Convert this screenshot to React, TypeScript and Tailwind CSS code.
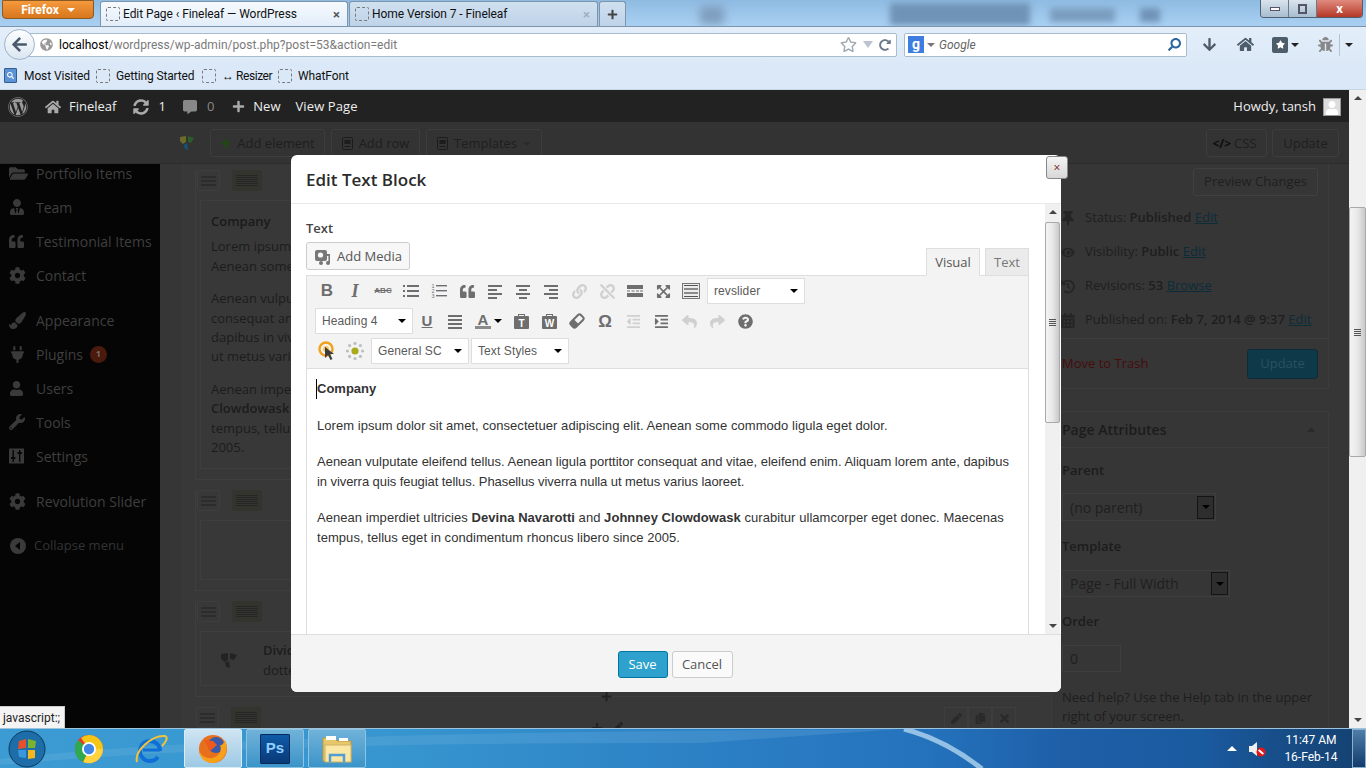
import React from "react";
import {
  FaFolderOpen, FaUserTie, FaQuoteLeft, FaCog, FaPaintBrush, FaPlug, FaUser, FaWrench,
  FaLink, FaUnlink, FaExpandArrowsAlt, FaOutdent, FaIndent, FaReply, FaShare, FaQuestionCircle,
  FaHome, FaSyncAlt, FaCommentAlt, FaPlus, FaThumbtack, FaEye, FaHistory, FaCalendarAlt, FaWordpress,
  FaArrowDown, FaSearch, FaStar, FaRegStar, FaGlobeAmericas, FaArrowLeft, FaRedoAlt, FaPen, FaCopy, FaTimes, FaBug,
} from "react-icons/fa";

const osans = "font-['Open_Sans',sans-serif]";
const chrome = "font-['Roboto',sans-serif]";

function Lines({ d, c = "#6e6e6e" }: { d: [number, number, number][]; c?: string }) {
  return (
    <svg width="16" height="16" viewBox="0 0 16 16">
      {d.map(([x, y, w], i) => (
        <rect key={i} x={x} y={y} width={w} height="2" fill={c} />
      ))}
    </svg>
  );
}

function TB({ children, w = "w-7" }: { children: React.ReactNode; w?: string }) {
  return <div className={`${w} h-6 flex items-center justify-center shrink-0`}>{children}</div>;
}

function Sel({ label, w }: { label: string; w: string }) {
  return (
    <div className={`${w} h-[26px] bg-white border border-[#dedede] flex items-center justify-between pl-[6px] pr-[6px] shrink-0 text-[12px] tracking-[0.1px] text-[#5a5a5a] font-['Liberation_Sans',sans-serif]`}>
      <span>{label}</span>
      <span className="w-0 h-0 border-x-[4px] border-x-transparent border-t-[4px] border-t-black" />
    </div>
  );
}

function Clip({ t }: { t: string }) {
  return (
    <svg width="17" height="17" viewBox="0 0 17 17">
      <rect x="1" y="3" width="15" height="13" rx="1" fill="#6e6e6e" />
      <rect x="5" y="1" width="7" height="3" fill="#6e6e6e" />
      <rect x="6" y="2" width="5" height="1" fill="#f3f3f3" />
      <text x="8.5" y="14" textAnchor="middle" fontSize="10" fontWeight="700" fill="#fff" fontFamily="Liberation Sans">{t}</text>
    </svg>
  );
}

function Toolbar() {
  const g = "#6e6e6e";
  const dis = "#d0d0d0";
  return (
    <div className="h-[94px] bg-[#f3f3f3] border-x border-y border-[#dedede] flex flex-col pl-[6px] pt-[2px] gap-1">
      <div className="flex items-center h-[26px]">
        <TB><span className="font-['Liberation_Sans',sans-serif] font-bold text-[17px] text-[#6e6e6e]">B</span></TB>
        <TB><span className="font-['Liberation_Serif',serif] italic font-bold text-[18px] text-[#6e6e6e]">I</span></TB>
        <TB><span className="font-['Liberation_Sans',sans-serif] text-[8px] font-bold text-[#6e6e6e] line-through">ABC</span></TB>
        <TB><Lines d={[[4, 2, 12], [4, 7, 12], [4, 12, 12], [0, 2, 2], [0, 7, 2], [0, 12, 2]]} /></TB>
        <TB>
          <svg width="16" height="16" viewBox="0 0 16 16" fontFamily="Liberation Sans" fontSize="5.5" fill="#6e6e6e">
            <text x="0.5" y="5">1</text><text x="0.5" y="10">2</text><text x="0.5" y="15">3</text>
            <rect x="5" y="2" width="11" height="1.4" /><rect x="5" y="7" width="11" height="1.4" /><rect x="5" y="12" width="11" height="1.4" />
          </svg>
        </TB>
        <TB><FaQuoteLeft size={15} color={g} /></TB>
        <TB><Lines d={[[1, 2, 14], [1, 6, 9], [1, 10, 14], [1, 14, 9]]} /></TB>
        <TB><Lines d={[[1, 2, 14], [4, 6, 8], [1, 10, 14], [4, 14, 8]]} /></TB>
        <TB><Lines d={[[1, 2, 14], [6, 6, 9], [1, 10, 14], [6, 14, 9]]} /></TB>
        <TB><FaLink size={15} color={dis} /></TB>
        <TB><FaUnlink size={15} color={dis} /></TB>
        <TB>
          <svg width="16" height="14" viewBox="0 0 16 14">
            <rect x="0" y="1" width="16" height="4" fill={g} />
            <rect x="0" y="6.5" width="3" height="1" fill={g} /><rect x="4.5" y="6.5" width="3" height="1" fill={g} /><rect x="9" y="6.5" width="3" height="1" fill={g} /><rect x="13" y="6.5" width="3" height="1" fill={g} />
            <rect x="0" y="9" width="16" height="4" fill={g} />
          </svg>
        </TB>
        <TB><FaExpandArrowsAlt size={15} color={g} /></TB>
        <TB>
          <svg width="18" height="16" viewBox="0 0 18 16">
            <rect x="0.5" y="0.5" width="17" height="15" fill="#ececec" stroke="#777" />
            <rect x="2" y="2" width="14" height="1" fill="#555" />
            <rect x="2" y="5" width="14" height="2" fill="#8a8a8a" />
            <rect x="2" y="9" width="14" height="2" fill="#8a8a8a" />
            <rect x="2" y="13" width="14" height="1" fill="#555" />
          </svg>
        </TB>
        <div className="ml-[2px]"><Sel label="revslider" w="w-[98px]" /></div>
      </div>
      <div className="flex items-center h-[26px] pl-[2px]">
        <Sel label="Heading 4" w="w-[98px]" />
        <TB><span className="font-['Liberation_Sans',sans-serif] text-[15px] font-bold text-[#6e6e6e] underline">U</span></TB>
        <TB><Lines d={[[1, 2, 14], [1, 6, 14], [1, 10, 14], [1, 14, 14]]} /></TB>
        <div className="w-[38px] h-6 flex items-center justify-start pl-[6px] gap-[3px] shrink-0">
          <div className="flex flex-col items-center w-4">
            <span className="font-['Liberation_Sans',sans-serif] font-bold text-[15px] leading-[13px] text-[#6e6e6e]">A</span>
            <span className="w-4 h-[3px] bg-[#8a8a8a]" />
          </div>
          <span className="w-0 h-0 border-x-[4px] border-x-transparent border-t-[4px] border-t-black" />
        </div>
        <TB><Clip t="T" /></TB>
        <TB><Clip t="W" /></TB>
        <TB>
          <svg width="16" height="16" viewBox="0 0 16 16">
            <g transform="rotate(-45 8 8)">
              <rect x="1" y="4.5" width="14" height="7" rx="2" fill="#f3f3f3" stroke={g} strokeWidth="2" />
              <rect x="1" y="4.5" width="6" height="7" rx="1" fill={g} />
            </g>
          </svg>
        </TB>
        <TB><span className="font-['Liberation_Sans',sans-serif] font-bold text-[17px] leading-none text-[#6e6e6e]">Ω</span></TB>
        <TB><FaOutdent size={15} color={dis} /></TB>
        <TB><FaIndent size={15} color={g} /></TB>
        <TB><FaReply size={15} color={dis} /></TB>
        <TB><FaShare size={15} color={dis} /></TB>
        <TB><FaQuestionCircle size={15} color={g} /></TB>
      </div>
      <div className="flex items-center h-[26px]">
        <TB>
          <svg width="18" height="20" viewBox="0 0 18 20">
            <circle cx="8" cy="8" r="6.5" fill="none" stroke="#f2a11d" strokeWidth="2.4" />
            <circle cx="8" cy="8" r="3" fill="#f7c25a" />
            <path d="M7 6 L7 17 L10 14 L12.5 19 L14.5 18 L12 13 L16 13 Z" fill="#3c3c3c" />
          </svg>
        </TB>
        <TB>
          <svg width="20" height="20" viewBox="0 0 20 20">
            <circle cx="10" cy="10" r="3.6" fill="#a9ab1c" />
            <g fill="#b9c0c0">
              <circle cx="10" cy="2.4" r="1.6" /><circle cx="10" cy="17.6" r="1.6" /><circle cx="2.4" cy="10" r="1.6" /><circle cx="17.6" cy="10" r="1.6" />
              <circle cx="4.6" cy="4.6" r="1.6" /><circle cx="15.4" cy="4.6" r="1.6" /><circle cx="4.6" cy="15.4" r="1.6" /><circle cx="15.4" cy="15.4" r="1.6" />
            </g>
          </svg>
        </TB>
        <div className="ml-[2px] flex gap-[2px]">
          <Sel label="General SC" w="w-[98px]" />
          <Sel label="Text Styles" w="w-[98px]" />
        </div>
      </div>
    </div>
  );
}

function ScrollV({ thumbTop, thumbH, wide }: { thumbTop: string; thumbH: string; wide?: boolean }) {
  return (
    <div className={`${wide ? "w-[17px]" : "w-[15px]"} h-full bg-[#f0f0f0] flex flex-col items-center shrink-0`}>
      <div className="h-[16px] flex items-center justify-center shrink-0"><span className="w-0 h-0 border-x-[4px] border-x-transparent border-b-[4px] border-b-[#444]" /></div>
      <div className={`${thumbTop} shrink-0`} />
      <div className={`${thumbH} w-full shrink-0 border border-[#a9a9a9] rounded-[2px] bg-gradient-to-r from-[#f4f4f4] via-[#e8e8e8] to-[#c9c9cc] flex items-center justify-center`}>
        <div className="w-[7px] flex flex-col gap-px">
          <span className="h-px bg-[#555]" /><span className="h-px bg-[#555]" /><span className="h-px bg-[#555]" /><span className="h-px bg-[#555]" />
        </div>
      </div>
      <div className="flex-1" />
      <div className="h-[16px] flex items-center justify-center shrink-0"><span className="w-0 h-0 border-x-[4px] border-x-transparent border-t-[4px] border-t-[#444]" /></div>
    </div>
  );
}

function Modal() {
  return (
    <div className={`absolute left-[291px] top-[155px] w-[770px] h-[537px] bg-white rounded-[6px] flex flex-col ${osans}`}>
      <div className="h-[49px] shrink-0 border-b border-[#e8e8e8] flex items-center pl-[15px] pt-[1px] text-[17px] font-semibold text-[#2b2b2b]">Edit Text Block</div>
      <div className="h-[430px] shrink-0 flex pr-px overflow-hidden">
        <div className="flex-1 pl-[15px] pt-[15px] overflow-hidden">
          <div className="text-[13px] leading-[18px] font-semibold text-[#444]">Text</div>
          <div className="w-[723px] mt-[5px]">
            <div className="h-[33px] flex justify-between items-start relative z-10">
              <div className="w-[104px] h-[28px] bg-[#f7f7f7] border border-[#ccc] rounded-[3px] flex items-center pl-[7px] pt-px gap-[5px] text-[13px] text-[#555]">
                <svg width="18" height="18" viewBox="0 0 18 18">
                  <rect x="1" y="2" width="12" height="11" rx="2" fill="#777" />
                  <circle cx="6.5" cy="7" r="2.6" fill="#f7f7f7" />
                  <path d="M13 6 h3 v9 a2 2 0 1 1 -1.6 -2 V8 h-1.4 Z" fill="#777" />
                  <circle cx="7" cy="15" r="2" fill="#777" />
                </svg>
                <span>Add Media</span>
              </div>
              <div className="flex gap-[5px] mt-[6px]">
                <div className="w-[54px] h-[28px] bg-[#f3f3f3] border border-[#dedede] border-b-[#f3f3f3] flex items-center justify-center pt-px text-[13px] text-[#555]">Visual</div>
                <div className="w-[44px] h-[28px] bg-[#ebebeb] border border-[#dedede] flex items-center justify-center pt-px text-[13px] text-[#777]">Text</div>
              </div>
            </div>
            <Toolbar />
            <div className="h-[300px] border-x border-[#dedede] px-[10px] pt-[10px] font-['Liberation_Sans',sans-serif] text-[13px] leading-[20px] text-[#333] tracking-[0.05px]">
              <div className="font-bold text-[13px] tracking-normal h-5 border-l border-black -ml-px">Company</div>
              <p className="mt-[17px]">Lorem ipsum dolor sit amet, consectetuer adipiscing elit. Aenean some commodo ligula eget dolor.</p>
              <p className="mt-4 whitespace-nowrap"><span className="tracking-[-0.01px]">Aenean vulputate eleifend tellus. Aenean ligula porttitor consequat and vitae, eleifend enim. Aliquam lorem ante, dapibus</span><br /><span className="tracking-[-0.07px]">in viverra quis feugiat tellus. Phasellus viverra nulla ut metus varius laoreet.</span></p>
              <p className="mt-4 whitespace-nowrap">Aenean imperdiet ultricies <b>Devina Navarotti</b> and <b>Johnney Clowdowask</b> curabitur ullamcorper eget donec. Maecenas<br />tempus, tellus eget in condimentum rhoncus libero since 2005.</p>
            </div>
          </div>
        </div>
        <ScrollV thumbTop="h-[2px]" thumbH="h-[201px]" />
      </div>
      <div className="flex-1 bg-[#f4f4f4] border-t border-[#dedede] rounded-b-[6px] flex items-center justify-center gap-1 pt-[2px] pr-[2px]">
        <div className="w-[50px] h-[27px] bg-[#2ea2cc] border border-[#0074a2] rounded-[3px] flex items-center justify-center text-[13px] text-white">Save</div>
        <div className="w-[61px] h-[27px] bg-[#fafafa] border border-[#ccc] rounded-[3px] flex items-center justify-center text-[13px] text-[#555]">Cancel</div>
      </div>
      <div className="absolute -right-[7px] top-px w-[22px] h-[23px] border border-[#888] rounded-[3px] bg-gradient-to-b from-[#f4f4f4] to-[#d8d8d8] flex items-center justify-center text-[12px] leading-none text-[#7a1c10]">×</div>
    </div>
  );
}

const Nav: [React.ReactNode, string, string][] = [
  [<FaFolderOpen size={19} />, "Portfolio Items", ""],
  [<FaUserTie size={16} />, "Team", ""],
  [<FaQuoteLeft size={15} />, "Testimonial Items", ""],
  [<FaCog size={17} />, "Contact", "mb-[11px]"],
  [<FaPaintBrush size={17} />, "Appearance", ""],
  [<FaPlug size={17} />, "Plugins", ""],
  [<FaUser size={15} />, "Users", ""],
  [<FaWrench size={16} />, "Tools", ""],
  [
    <svg width="16" height="16" viewBox="0 0 16 16">
      <rect width="15" height="15" y="0.5" fill="#3a3a3a" />
      <rect x="3.5" y="2" width="1.4" height="12" fill="#050505" /><rect x="2" y="9" width="4.4" height="2" fill="#050505" />
      <rect x="10" y="2" width="1.4" height="12" fill="#050505" /><rect x="8.5" y="4" width="4.4" height="2" fill="#050505" />
    </svg>,
    "Settings",
    "mb-[11px]",
  ],
  [<FaCog size={17} />, "Revolution Slider", "mb-[11px]"],
];

function Sidebar() {
  return (
    <div className={`w-[160px] shrink-0 bg-[#050505] overflow-hidden ${osans}`}>
      <div className="-mt-[8px]">
        {Nav.map(([ic, label, cls]) => (
          <div key={label} className={`h-[34px] flex items-center text-[14px] text-[#3f3f3f] ${cls}`}>
            <span className="w-[36px] pl-[9px] flex justify-start text-[#3a3a3a] shrink-0">{ic}</span>
            <span>{label}</span>
            {label === "Plugins" && (
              <span className="ml-[7px] w-[17px] h-[17px] rounded-full bg-[#4a1a0c] text-[#7a6a60] text-[9px] font-bold flex items-center justify-center">1</span>
            )}
          </div>
        ))}
        <div className="h-[34px] mt-[3px] flex items-center text-[13px] text-[#333]">
          <span className="w-[34px] pl-[10px] shrink-0">
            <svg width="16" height="16" viewBox="0 0 16 16"><circle cx="8" cy="8" r="8" fill="#3a3a3a" /><path d="M10 4 V12 L5 8 Z" fill="#050505" /></svg>
          </span>
          <span>Collapse menu</span>
        </div>
      </div>
    </div>
  );
}

function RowHead({ right }: { right?: boolean }) {
  return (
    <div className="h-[21px] flex items-start gap-3 pl-px">
      <div className="w-[23px] h-[21px] border border-[#3e3e3e] rounded-[2px] flex flex-col justify-center gap-[2px] px-[3px]">
        <span className="h-[2px] bg-[#2c2c2c]" /><span className="h-[2px] bg-[#2c2c2c]" /><span className="h-[2px] bg-[#2c2c2c]" />
      </div>
      <div className="w-[30px] h-[21px] bg-[#34342e] rounded-[2px] flex flex-col justify-center gap-px px-[4px]">
        <span className="h-px bg-[#262626]" /><span className="h-px bg-[#262626]" /><span className="h-px bg-[#262626]" /><span className="h-px bg-[#262626]" /><span className="h-px bg-[#262626]" /><span className="h-px bg-[#262626]" />
      </div>
      {right && (
        <div className="ml-[318px] mt-[15px] flex gap-[10px] text-[#232323]">
          <FaPlus size={12} /><FaPen size={10} />
        </div>
      )}
      {right && (
        <div className="ml-auto mr-[25px] flex text-[#2a2a2a]">
          <span className="w-6 h-[22px] border border-[#3e3e3e] flex items-center justify-center"><FaPen size={11} /></span>
          <span className="w-6 h-[22px] border border-[#3e3e3e] flex items-center justify-center"><FaCopy size={11} /></span>
          <span className="w-6 h-[22px] border border-[#3e3e3e] flex items-center justify-center"><FaTimes size={13} /></span>
        </div>
      )}
    </div>
  );
}

function Row({ children }: { children: React.ReactNode }) {
  return <div className="w-[846px] border-l border-b border-[#3e3e3e] pb-[10px]">{children}</div>;
}

function Content() {
  const box = "border border-[#3e3e3e] mt-[9px] ml-[4px] w-[841px]";
  return (
    <div className={`w-[868px] shrink-0 border-l border-[#3a3a3a] ml-[22px] pl-[12px] pr-[9px] pt-[6px] overflow-hidden text-[13px] leading-[19.4px] text-[#1c1c1c] bg-[#383838] ${osans}`}>
      <Row>
        <RowHead />
        <div className={`${box} h-[269px] p-[10px] pt-[11px] whitespace-nowrap`}>
          <div className="font-semibold text-[#1a1a1a]">Company</div>
          <p className="mt-[6px]">Lorem ipsum<br />Aenean some</p>
          <p className="mt-[13px]">Aenean vulpu<br />consequat an<br />dapibus in viv<br />ut metus vari</p>
          <p className="mt-[13px]">Aenean impe<br /><b className="font-semibold">Clowdowask</b><br />tempus, tellu<br />2005.</p>
        </div>
      </Row>
      <div className="h-[10px]" />
      <Row>
        <RowHead />
        <div className={`${box} h-[60px]`} />
      </Row>
      <div className="h-[10px]" />
      <Row>
        <RowHead />
        <div className={`${box} h-[55px] flex items-center pl-[18px] pt-[3px] gap-[24px] whitespace-nowrap`}>
          <svg width="20" height="18" viewBox="0 0 20 18"><path d="M2 3 L9 2 L9 9 L6 11 L2 8 Z M11 2 L18 4 L15 9 L11 8 Z M6 12 L10 10 L11 17 L7 16 Z" fill="#232323" /></svg>
          <div className="leading-[20px]"><b className="font-semibold">Divid</b><br />dotte</div>
        </div>
      </Row>
      <div className="-mt-[11px] h-[21px] flex justify-center items-center text-[#232323] w-[822px]"><FaPlus size={11} /></div>
      <RowHead right />
    </div>
  );
}

function Side() {
  const line = "flex items-center h-[34px] whitespace-nowrap";
  const link = "underline text-[#0c2c3a]";
  const ic = "w-[23px] pr-[9px] shrink-0 text-[#252525] flex justify-center -ml-[2px]";
  return (
    <div className={`flex-1 pl-[1px] pr-[21px] text-[13px] text-[#1e1e1e] overflow-hidden bg-[#363636] ${osans}`}>
      <div className="border border-[#3c3c3c] border-t-0 w-[278px] h-[225px] flex flex-col">
        <div className="flex justify-end pr-[10px] pt-[4px] h-[32px] shrink-0">
          <div className="w-[125px] h-[28px] border border-[#404040] rounded-[3px] flex items-center justify-center text-[#1f1f1f]">Preview Changes</div>
        </div>
        <div className="pl-[11px] mt-[5px]">
          <div className={line}><span className={ic}><FaThumbtack size={15} /></span><span className="ml-px">Status: <b className="font-semibold">Published</b> <span className={link}>Edit</span></span></div>
          <div className={line}><span className={ic}><FaEye size={17} /></span><span className="ml-px">Visibility: <b className="font-semibold">Public</b> <span className={link}>Edit</span></span></div>
          <div className={line}><span className={ic}><FaHistory size={15} /></span><span className="ml-px">Revisions: <b className="font-semibold">53</b> <span className={link}>Browse</span></span></div>
          <div className={line}><span className={ic}><FaCalendarAlt size={15} /></span><span className="ml-px">Published on: <b className="font-semibold">Feb 7, 2014 @ 9:37</b> <span className={link}>Edit</span></span></div>
        </div>
        <div className="mt-px border-t border-[#3e3e3e] flex-1 flex items-center justify-between pl-[10px] pr-[10px]">
          <span className="text-[#470c0c]">Move to Trash</span>
          <div className="w-[71px] h-[30px] bg-[#0e3949] border border-[#0c2c3a] rounded-[3px] flex items-center justify-center text-[#2a5060]">Update</div>
        </div>
      </div>
      <div className="border border-[#3c3c3c] w-[278px] mt-[22px] h-[400px]">
        <div className="h-[36px] border-b border-[#3c3c3c] flex items-center justify-between pl-[10px] pr-[13px] text-[14px] font-semibold text-[#1c1c1c]">
          <span>Page Attributes</span>
          <span className="w-0 h-0 border-x-[4px] border-x-transparent border-b-[5px] border-b-[#2a2a2a]" />
        </div>
        <div className="pl-[10px]">
          <div className="mt-[13px] h-[18px] leading-[18px] font-semibold text-[#1c1c1c]">Parent</div>
          <div className="mt-[14px] w-[154px] h-[28px] border border-[#3e3e3e] flex items-center justify-between pl-[7px] pr-[1px] text-[14px] text-[#1f1f1f]">
            <span>(no parent)</span>
            <span className="w-[17px] h-[23px] border border-[#141414] bg-[#2e2e2e] flex items-center justify-center"><span className="w-0 h-0 border-x-[4px] border-x-transparent border-t-[4px] border-t-black" /></span>
          </div>
          <div className="mt-[16px] h-[18px] leading-[18px] font-semibold text-[#1c1c1c]">Template</div>
          <div className="mt-[15px] w-[168px] h-[27px] border border-[#3e3e3e] flex items-center justify-between pl-[7px] pr-[1px] text-[14px] text-[#1f1f1f]">
            <span>Page - Full Width</span>
            <span className="w-[17px] h-[23px] border border-[#141414] bg-[#2e2e2e] flex items-center justify-center"><span className="w-0 h-0 border-x-[4px] border-x-transparent border-t-[4px] border-t-black" /></span>
          </div>
          <div className="mt-[15px] h-[18px] leading-[18px] font-semibold text-[#1c1c1c]">Order</div>
          <div className="mt-[15px] w-[59px] h-[27px] border border-[#3e3e3e] flex items-center pl-[7px] text-[14px] text-[#1f1f1f]">0</div>
          <div className="mt-[16px] leading-[19px] whitespace-nowrap">Need help? Use the Help tab in the upper<br />right of your screen.</div>
        </div>
      </div>
    </div>
  );
}

function Dashed() {
  return <span className="block w-[14px] h-[14px] border border-dashed border-[#7a7a7a] rounded-[2px] shrink-0" />;
}

function Tab({ label, active, w }: { label: string; active?: boolean; w: string }) {
  return (
    <div className={`${w} h-[25px] shrink-0 rounded-t-[3px] border border-b-0 border-[#7d95ab] flex items-center pl-[5px] pr-[7px] gap-[3px] text-[12px] text-[#111] ${active ? "bg-gradient-to-b from-[#f6fafe] to-[#e2edf9]" : "bg-gradient-to-b from-[#cfe0f0] to-[#bfd3e8]"}`}>
      <Dashed />
      <span className="flex-1 whitespace-nowrap overflow-hidden tracking-[-0.07px]">{label}</span>
      <span className={`text-[13px] font-bold leading-none ${active ? "text-[#555]" : "text-[#9fb0c0]"}`}>×</span>
    </div>
  );
}

function Caret({ c = "#333" }: { c?: string }) {
  return <span className="block w-0 h-0 border-x-[4px] border-x-transparent border-t-[4px]" style={{ borderTopColor: c }} />;
}

function Browser() {
  return (
    <div className={`h-[90px] shrink-0 flex flex-col ${chrome}`}>
      <div className="h-[27px] relative overflow-hidden border-b border-[#7d95ab] bg-gradient-to-b from-[#8fbbe2] to-[#a9d0f2] flex items-end">
        <div className="absolute left-[890px] top-[3px] w-[140px] h-[22px] bg-[#6f93b6] blur-[3px]" />
        <div className="absolute left-[1050px] top-[8px] w-[65px] h-[14px] bg-[#7a9dbf] blur-[3px]" />
        <div className="absolute left-[1140px] top-[8px] w-[20px] h-[14px] bg-[#6f93b6] blur-[3px]" />
        <div className="absolute left-[700px] top-[6px] w-[24px] h-[18px] bg-[#7f9fbe] blur-[4px]" />
        <div className="absolute left-[2px] top-0 w-[92px] h-[19px] rounded-b-[4px] border border-[#8a5a20] bg-gradient-to-b from-[#f59a3c] to-[#d8761c] flex items-center justify-center gap-[8px] text-[12px] font-bold text-white">
          <span>Firefox</span><Caret c="#fff" />
        </div>
        <div className="relative flex items-end pl-[100px] w-full h-full gap-px">
          <Tab label="Edit Page ‹ Fineleaf — WordPress" active w="w-[248px]" />
          <Tab label="Home Version 7 - Fineleaf" w="w-[249px]" />
          <div className="w-[27px] h-[25px] rounded-t-[3px] border border-b-0 border-[#7d95ab] bg-gradient-to-b from-[#cfe0f0] to-[#bfd3e8] flex items-center justify-center"><FaPlus size={11} color="#444" /></div>
        </div>
        <div className="absolute left-[1260px] top-0 w-[103px] h-[18px] rounded-b-[4px] border border-[#50606f] border-t-0 flex overflow-hidden">
          <div className="w-[28px] bg-gradient-to-b from-[#d9e4ee] to-[#a8bdd0] border-r border-[#6a7a88] flex items-center justify-center"><span className="w-[10px] h-[4px] bg-white border border-[#556]" /></div>
          <div className="w-[28px] bg-gradient-to-b from-[#d9e4ee] to-[#a8bdd0] border-r border-[#6a7a88] flex items-center justify-center"><span className="w-[9px] h-[10px] bg-transparent border-2 border-[#556]" /></div>
          <div className="flex-1 bg-gradient-to-b from-[#e08a7e] to-[#b43526] flex items-center justify-center text-white font-bold text-[13px] leading-none">x</div>
        </div>
      </div>
      <div className="h-[35px] bg-gradient-to-b from-[#e3eefa] to-[#dce9f7] flex items-center relative">
        <div className="absolute left-[4px] top-[2px] w-[31px] h-[31px] rounded-full bg-gradient-to-b from-[#fdfeff] to-[#dbe6f1] border border-[#9fb2c6] flex items-center justify-center z-10"><FaArrowLeft size={17} color="#4a5a6a" /></div>
        <div className="ml-[22px] w-[875px] h-[24px] bg-white border border-[#a8bcd0] rounded-[2px] flex items-center pl-[17px] pr-[5px] text-[12px] text-[#7a7a7a]">
          <FaGlobeAmericas size={13} color="#9a9a9a" className="mr-[6px]" />
          <span className="tracking-[0.04px]"><span className="text-black">localhost</span>/wordpress/wp-admin/post.php?post=53&amp;action=edit</span>
          <span className="ml-auto flex items-center gap-[6px]">
            <FaRegStar size={17} color="#a0a8b0" />
            <span className="w-0 h-0 border-x-[5px] border-x-transparent border-t-[7px] border-t-[#b9c4cf]" />
            <FaRedoAlt size={12} color="#6a7a88" />
          </span>
        </div>
        <div className="ml-[7px] w-[283px] h-[24px] bg-white border border-[#a8bcd0] rounded-[2px] flex items-center pl-[3px] pr-[5px] text-[12px] italic text-[#666]">
          <span className="w-[16px] h-[17px] bg-[#3d7de0] text-white text-[14px] font-bold not-italic flex items-center justify-center">g</span>
          <span className="mx-[3px]"><Caret c="#777" /></span>
          <span className="ml-[1px]">Google</span>
          <FaSearch size={13} color="#2a66a0" className="ml-auto -scale-x-100" />
        </div>
        <div className="ml-[15px] flex items-center text-[#4e5d6c]">
          <FaArrowDown size={15} />
          <FaHome size={17} className="ml-[20px]" />
          <span className="ml-[18px] w-[16px] h-[16px] bg-[#4e5d6c] rounded-[2px] flex items-center justify-center"><FaStar size={9} color="#fff" /></span>
          <span className="ml-[3px]"><Caret c="#222" /></span>
          <FaBug size={15} color="#888" className="ml-[19px]" />
          <span className="ml-[6px] h-[22px] w-px bg-[#b5c3d1]" />
          <span className="ml-[5px]"><Caret c="#222" /></span>
        </div>
      </div>
      <div className="h-[28px] bg-[#dae8f7] flex items-center pl-[4px] text-[12px] tracking-[-0.1px] text-[#111] border-b border-[#c7d4e2]">
        <span className="w-[13px] h-[15px] bg-[#5b93d5] border border-[#2f5e95] rounded-[1px] flex items-center justify-center"><FaSearch size={7} color="#fff" /></span>
        <span className="ml-[7px] w-[65px] whitespace-nowrap">Most Visited</span>
        <span className="ml-[7px]"><Dashed /></span>
        <span className="ml-[6px] w-[78px] whitespace-nowrap tracking-[-0.15px]">Getting Started</span>
        <span className="ml-[8px]"><Dashed /></span>
        <span className="ml-[6px] w-[49px] whitespace-nowrap tracking-[-0.45px]">↔ Resizer</span>
        <span className="ml-[7px]"><Dashed /></span>
        <span className="ml-[6px]">WhatFont</span>
      </div>
    </div>
  );
}

function WpBar() {
  return (
    <div className={`h-[32px] shrink-0 bg-[#222] flex items-center pt-px text-[13px] text-[#eee] ${osans}`}>
      <span className="ml-[8px]"><FaWordpress size={20} color="#999" /></span>
      <FaHome size={16} color="#aaa" className="ml-[17px]" />
      <span className="ml-[8px]">Fineleaf</span>
      <FaSyncAlt size={16} color="#aaa" className="ml-[17px]" />
      <span className="ml-[9px]">1</span>
      <FaCommentAlt size={14} color="#888" className="ml-[17px]" />
      <span className="ml-[10px] text-[#888]">0</span>
      <FaPlus size={13} color="#aaa" className="ml-[18px]" />
      <span className="ml-[8px]">New</span>
      <span className="ml-[15px] tracking-[0.1px]">View Page</span>
      <span className="ml-auto">Howdy, tansh</span>
      <span className="ml-[7px] mr-[8px] w-[18px] h-[18px] bg-[#ddd] border border-[#999] flex items-end justify-center overflow-hidden"><FaUser size={14} color="#fff" /></span>
    </div>
  );
}

function Btn({ children, w, gap = "gap-[6px]" }: { children: React.ReactNode; w: string; gap?: string }) {
  return <div className={`${w} h-[28px] border border-[#3d3d3d] rounded-[3px] flex items-center justify-center ${gap} pt-[2px] text-[13px] text-[#1e1e1e]`}>{children}</div>;
}

function Doc() {
  return (
    <svg width="11" height="13" viewBox="0 0 11 13">
      <rect x="0.5" y="0.5" width="10" height="12" rx="1" fill="none" stroke="#1c1c1c" />
      <rect x="2.5" y="3" width="6" height="4" fill="#1c1c1c" /><rect x="2.5" y="9" width="6" height="1" fill="#1c1c1c" />
    </svg>
  );
}

function Composer() {
  return (
    <div className={`h-[42px] shrink-0 bg-[#333] border-b border-[#2c2c2c] flex items-center ${osans}`}>
      <svg className="ml-[179px]" width="16" height="16" viewBox="0 0 16 16">
        <path d="M1 2 L7 1 L7 7 L4 9 L1 6 Z" fill="#6b6a2a" /><path d="M9 1 L15 3 L12 8 L9 7 Z" fill="#2d5c2b" /><path d="M5 10 L8 8 L9 15 L6 14 Z" fill="#12557a" />
      </svg>
      <div className="ml-[15px] flex gap-[6px]">
        <Btn w="w-[115px]"><FaPlus size={11} color="#1e4a10" /><span>Add element</span></Btn>
        <Btn w="w-[89px]"><Doc /><span>Add row</span></Btn>
        <Btn w="w-[116px]"><Doc /><span>Templates</span><Caret c="#2a2a2a" /></Btn>
      </div>
      <div className="ml-auto mr-[10px] flex gap-[5px]">
        <Btn w="w-[61px]" gap="gap-[3px] pr-[4px]"><b className="text-[#0c0c0c] text-[12px]">&lt;/&gt;</b><span>CSS</span></Btn>
        <Btn w="w-[67px]"><span>Update</span></Btn>
      </div>
    </div>
  );
}

function TaskBtn({ children, active }: { children: React.ReactNode; active?: boolean }) {
  return (
    <div className={`w-[58px] h-[39px] border rounded-[2px] flex items-center justify-center shrink-0 ${active ? "border-[#d8ecf7] bg-gradient-to-b from-[#cfe4f2] to-[#9cc9e4]" : "bg-gradient-to-b from-[#6fb2d9] to-[#3a94c9] border-[#8fc4e0]"}`}>{children}</div>
  );
}

function Taskbar() {
  return (
    <div className="h-[40px] shrink-0 relative overflow-hidden border-t border-[#9fc3dd] bg-[linear-gradient(90deg,#3b9bd2_0%,#3796cf_28%,#2a7dc3_55%,#2472bc_68%,#1e5fa8_78%,#1a5a9f_88%,#14406f_100%)] flex items-center font-['Roboto',sans-serif]">
      <svg className="absolute left-0 top-0" width="1366" height="40" viewBox="0 0 1366 40">
        <path d="M904 0 C935 8 962 24 982 40" fill="none" stroke="#a8cfec" strokeWidth="5" opacity="0.85" />
        <path d="M0 30 C200 8 500 2 900 0 L700 14 C400 14 200 18 0 36 Z" fill="#7fbce3" opacity="0.22" />
      </svg>
      <svg className="ml-[8px] relative" width="38" height="38" viewBox="0 0 38 38">
        <circle cx="19" cy="19" r="18" fill="#1c6da8" stroke="#0e3a5c" />
        <path d="M11 11 L18 9 L18 18 L10 19 Z" fill="#e6502b" /><path d="M20 9 L28 11 L27 18 L20 18 Z" fill="#7ab42c" />
        <path d="M10 20 L18 20 L18 28 L11 27 Z" fill="#3b97dc" /><path d="M20 20 L27 20 L27 28 L20 29 Z" fill="#f5b81c" />
      </svg>
      <svg className="ml-[28px] relative" width="30" height="30" viewBox="0 0 30 30">
        <circle cx="15" cy="15" r="14" fill="#e23b2e" />
        <path d="M15 1 A14 14 0 0 1 29 15 L15 15 L7 4 A14 14 0 0 1 15 1 Z" fill="#f5c518" />
        <path d="M15 15 L29 15 A14 14 0 0 1 9 28 Z" fill="#ffd33d" />
        <path d="M15 15 L9 28 A14 14 0 0 1 1 15 A14 14 0 0 1 4 6 Z" fill="#2da94f" />
        <circle cx="15" cy="15" r="7" fill="#fff" /><circle cx="15" cy="15" r="5.2" fill="#3f86e8" />
      </svg>
      <svg className="ml-[30px] relative" width="34" height="32" viewBox="0 0 34 32">
        <path d="M26 18 A10 10 0 1 0 24 24" fill="none" stroke="#0f6fd6" strokeWidth="4" />
        <rect x="9" y="15.5" width="17" height="3" fill="#0f6fd6" />
        <path d="M3 29 C0 18 18 2 31 3 C34 4 33 8 28 13" fill="none" stroke="#f2c23c" strokeWidth="2" />
      </svg>
      <div className="ml-[16px] flex gap-[4px] relative">
        <TaskBtn active>
          <svg width="32" height="32" viewBox="0 0 32 32">
            <circle cx="16" cy="16" r="14" fill="#e8701c" />
            <circle cx="19" cy="12" r="8" fill="#3a5aa8" />
            <path d="M28 7 C33 18 26 30 15 30 C8 30 3 25 2 18 C5 24 12 27 18 24 C23 22 25 17 23 12 C25 13 27 10 28 7 Z" fill="#f7a11a" />
            <path d="M7 7 L16 8 L20 12 L13 18 Z" fill="#ee5a1c" />
          </svg>
        </TaskBtn>
        <TaskBtn>
          <div className="w-[30px] h-[30px] bg-gradient-to-b from-[#0f5aa8] to-[#0a3a78] border border-[#072a5a] rounded-[1px] flex items-center justify-center text-[#8fd0ff] text-[15px] font-bold font-['Liberation_Sans',sans-serif]">Ps</div>
        </TaskBtn>
        <TaskBtn>
          <svg width="32" height="30" viewBox="0 0 32 30">
            <path d="M2 4 H14 L16 7 H30 V27 H2 Z" fill="#e8c66a" stroke="#b99a42" />
            <rect x="5" y="2" width="10" height="4" fill="#fff" /><rect x="18" y="4" width="9" height="3" fill="#fff" />
            <rect x="4" y="11" width="26" height="17" fill="#fbe7a4" stroke="#cfb268" />
            <path d="M9 28 V21 H23 V28" fill="none" stroke="#4f9fd4" strokeWidth="2.5" />
          </svg>
        </TaskBtn>
      </div>
      <div className="ml-auto flex items-center relative">
        <span className="w-0 h-0 border-x-[5px] border-x-transparent border-b-[5px] border-b-white" />
        <span className="ml-[11px] relative w-[18px] h-[18px]">
          <svg width="18" height="18" viewBox="0 0 18 18">
            <path d="M1 6 H4 L9 2 V16 L4 12 H1 Z" fill="#f0f0f0" />
            <circle cx="13" cy="12" r="4.5" fill="#e01818" /><rect x="10" y="11" width="6" height="2" fill="#fff" transform="rotate(40 13 12)" />
          </svg>
        </span>
        <div className="ml-[18px] w-[54px] flex flex-col items-center text-white text-[12px] leading-[17px] whitespace-nowrap">
          <span>11:47 AM</span><span>16-Feb-14</span>
        </div>
        <div className="ml-[14px] w-[14px] h-[39px] border border-[#8fb0cc] bg-gradient-to-b from-[#4f7ea8] to-[#123c6c]" />
      </div>
    </div>
  );
}

export default function App() {
  return (
    <div className="relative w-[1366px] h-[768px] overflow-hidden flex flex-col bg-[#333]">
      <Browser />
      <div className="h-[638px] shrink-0 flex">
        <div className="w-[1349px] shrink-0 flex flex-col">
          <WpBar />
          <Composer />
          <div className="h-[564px] flex overflow-hidden bg-[#363636]">
            <Sidebar />
            <Content />
            <Side />
          </div>
        </div>
        <ScrollV thumbTop="h-[101px]" thumbH="h-[250px]" wide />
      </div>
      <Taskbar />
      <Modal />
      <div className="absolute left-0 top-[706px] w-[65px] h-[22px] bg-[#f4f4f4] border-t border-r border-[#ccc] flex items-center pl-[3px] text-[12px] text-[#222] font-['Roboto',sans-serif]">javascript:;</div>
    </div>
  );
}
